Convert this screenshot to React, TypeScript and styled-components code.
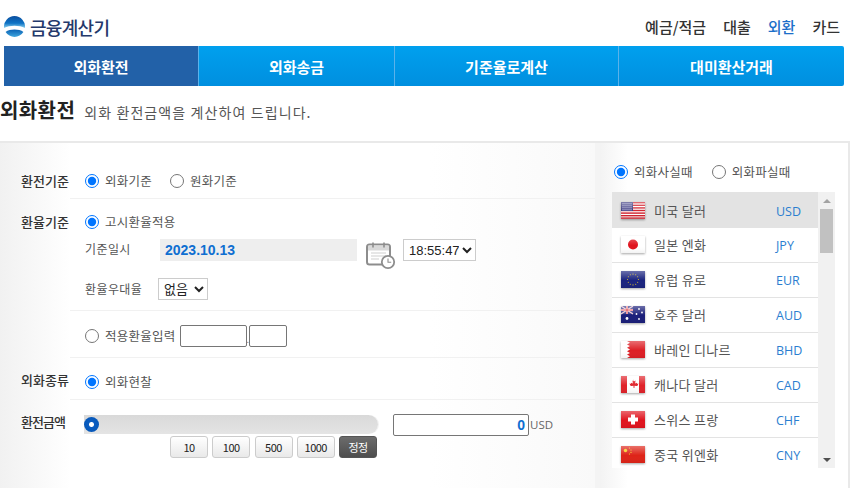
import React from 'react';
import styled, { createGlobalStyle } from 'styled-components';

const Global = createGlobalStyle`
  html, body { margin: 0; padding: 0; background: #fff; overflow: hidden; }
  body { width: 851px; height: 488px; font-family: "Noto Sans CJK KR", "Noto Sans", sans-serif; color: #444; }
  * { box-sizing: border-box; }
`;

const Page = styled.div`
  width: 851px;
  height: 488px;
  overflow: hidden;
`;

const Header = styled.header`
  height: 46px;
  padding: 16px 11px 0 4px;
  display: flex;
  justify-content: space-between;
  align-items: flex-start;
`;

const Brand = styled.div`
  display: flex;
  align-items: center;
  gap: 5px;
  height: 21px;
  font-size: 18px;
  font-weight: 500;
  letter-spacing: -0.7px;
  color: #24396b;
`;

const TopNav = styled.nav`
  display: flex;
  gap: 17px;
  padding-top: 1px;
  font-size: 15px;
  line-height: 20px;
  font-weight: 500;
`;

const TopLink = styled.a<{ $on?: boolean }>`
  color: ${p => (p.$on ? '#1c6fc9' : '#333')};
`;

const Tabs = styled.div`
  margin-left: 4px;
  width: 840px;
  height: 40px;
  display: grid;
  grid-template-columns: 195px 196px 224px 225px;
`;

const Tab = styled.div<{ $on?: boolean }>`
  display: flex;
  align-items: center;
  justify-content: center;
  font-size: 15px;
  font-weight: 700;
  color: #fff;
  background: ${p => (p.$on ? '#2261a8' : 'linear-gradient(#00a0ee, #008fdf)')};
  border-right: 1px solid #5bb2ea;
  &:last-child { border-right: 0; border-radius: 0 2px 2px 0; }
`;

const Heading = styled.div`
  height: 55px;
  padding-top: 10px;
  display: flex;
  align-items: flex-start;
  gap: 9px;
`;

const HeadTitle = styled.h2`
  margin: 0;
  font-size: 20px;
  line-height: 28px;
  font-weight: 700;
  letter-spacing: 0.4px;
  color: #222;
`;

const HeadSub = styled.span`
  padding-top: 6px;
  font-size: 14px;
  line-height: 20px;
  color: #555;
  letter-spacing: 1.1px;
`;

const Panel = styled.div`
  display: flex;
  width: 850px;
  height: 347px;
  border-top: 2px solid #e9e9e9;
  border-right: 2px solid #e9e9e9;
`;

const FormSide = styled.section`
  width: 595px;
  background: linear-gradient(90deg, #f1f1f1 0, #fff 70px, #fff 430px, #f9f9f9 595px);
`;

const Divider = styled.div`
  width: 5px;
  background: #f4f4f4;
`;

const Row = styled.div<{ $h: number }>`
  display: flex;
  height: ${p => p.$h}px;
`;

const RowLabel = styled.div<{ $top: number; $tight?: boolean }>`
  width: 70px;
  padding: ${p => p.$top}px 0 0 21px;
  font-size: 13px;
  line-height: 18px;
  font-weight: 500;
  letter-spacing: ${p => (p.$tight ? '-1px' : '0')};
  color: #333;
  white-space: nowrap;
`;

const RowBody = styled.div<{ $first?: boolean }>`
  flex: 1;
  padding-left: 15px;
  border-top: ${p => (p.$first ? '0' : '1px solid #f1f1f1')};
`;

const Line = styled.div<{ $top?: number; $start?: boolean }>`
  display: flex;
  align-items: ${p => (p.$start ? 'flex-start' : 'center')};
  padding-top: ${p => p.$top ?? 0}px;
`;

const RadioWrap = styled.label<{ $gap?: number }>`
  display: inline-flex;
  align-items: center;
  gap: 6px;
  margin-right: ${p => p.$gap ?? 0}px;
  font-size: 12.5px;
  line-height: 18px;
  letter-spacing: 0.25px;
  color: #555;
`;

const RadioDot = styled.input.attrs({ type: 'radio' })`
  width: 14px;
  height: 14px;
  margin: 0;
  accent-color: #0075ff;
`;

const SubLabel = styled.span<{ $w: number }>`
  width: ${p => p.$w}px;
  font-size: 12px;
  line-height: 20px;
  letter-spacing: 0.4px;
  color: #555;
`;

const DateField = styled.div`
  width: 197px;
  height: 22px;
  padding-left: 5px;
  background: #eee;
  font-family: "Liberation Sans", Arial, sans-serif;
  font-size: 14px;
  line-height: 23px;
  font-weight: 700;
  color: #0f6fd1;
`;

const PickerIcon = styled.svg`
  width: 30px;
  height: 28px;
  margin: 3px 7px 0 9px;
  flex: none;
`;

const NativeSelect = styled.select<{ $w: number }>`
  width: ${p => p.$w}px;
  height: 22px;
  padding: 0 0 0 1px;
  border: 1px solid #ccc;
  border-radius: 0;
  background: #fff;
  font-family: "Liberation Sans", "Noto Sans CJK KR", sans-serif;
  font-size: 13px;
  color: #222;
`;

const RateBox = styled.div<{ $w: number }>`
  width: ${p => p.$w}px;
  height: 22px;
  border: 1px solid #767676;
  border-radius: 2px;
  background: #fff;
`;

const Dot = styled.span`
  width: 2px;
  font-size: 9px;
  line-height: 14px;
  align-self: flex-end;
  color: #888;
`;

const SliderArea = styled.div`
  display: flex;
  gap: 15px;
  margin-left: -1px;
  padding-top: 14px;
`;

const SliderCol = styled.div`
  width: 294px;
`;

const SliderTrack = styled.div`
  height: 19px;
  margin-top: 1px;
  background: linear-gradient(#d9d9d9, #e4e4e4);
  border-radius: 0 10px 10px 0;
  box-shadow: 1px 0 0 #f2f2f2;
  position: relative;
`;

const SliderKnob = styled.span`
  position: absolute;
  left: 0;
  top: 2px;
  width: 15px;
  height: 15px;
  border-radius: 50%;
  background: radial-gradient(circle, #fff 0 2px, #0a5cc0 3px, #0455b4 100%);
`;

const Steps = styled.div`
  display: flex;
  justify-content: flex-end;
  gap: 4.25px;
  padding: 2px 1px 0 0;
`;

const StepBtn = styled.button<{ $dark?: boolean }>`
  width: 38px;
  height: 22px;
  padding: 0;
  border: 1px solid ${p => (p.$dark ? '#555' : '#ccc')};
  border-radius: 3px;
  background: ${p => (p.$dark ? 'linear-gradient(#6c6c6c, #4e4e4e)' : 'linear-gradient(#fff, #e9e9e9)')};
  color: ${p => (p.$dark ? '#fff' : '#222')};
  font-family: "Noto Sans CJK KR", sans-serif;
  font-size: 11px;
  line-height: 20px;
  letter-spacing: -0.5px;
`;

const AmountBox = styled.div`
  width: 136px;
  height: 22px;
  padding-right: 3px;
  border: 1px solid #767676;
  border-radius: 2px;
  background: #fff;
  text-align: right;
  font-family: "Liberation Sans", Arial, sans-serif;
  font-size: 14px;
  line-height: 21px;
  font-weight: 700;
  color: #0f6fd1;
`;

const Unit = styled.span`
  padding-left: 1px;
  font-family: "Open Sans", sans-serif;
  font-size: 11.5px;
  line-height: 22px;
  color: #666;
`;

const AmountWrap = styled.div`
  display: flex;
`;

const ListSide = styled.aside`
  flex: 1;
  padding: 20px 0 0 12px;
  background: linear-gradient(90deg, #f3f3f3 0, #fff 28px);
`;

const Modes = styled.div`
  display: flex;
  align-items: flex-start;
  height: 29px;
  padding-left: 2px;
`;

const ListFrame = styled.div`
  display: flex;
  width: 223px;
  height: 276px;
`;

const CurrencyList = styled.ul`
  width: 206px;
  margin: 0;
  padding: 0;
  list-style: none;
  background: #fff;
`;

const CurrencyRow = styled.li<{ $on?: boolean; $h: number }>`
  height: ${p => p.$h}px;
  display: grid;
  grid-template-columns: 33px 122px 1fr;
  padding: ${p => (p.$on ? 10 : 8)}px 0 0 9px;
  background: ${p => (p.$on ? '#e3e3e3' : '#fff')};
  border-bottom: ${p => (p.$on ? '0' : '1px solid #e3e3e3')};
  &:last-child { border-bottom: 0; }
`;

const FlagSvg = styled.svg`
  width: 24px;
  height: 17px;
  display: block;
  filter: drop-shadow(0 1px 1px rgba(0, 0, 0, 0.35));
`;

const CurName = styled.span`
  font-size: 13px;
  line-height: 18px;
  letter-spacing: 0.3px;
  color: #555;
`;

const CurCode = styled.span`
  padding-top: 1px;
  font-family: "Open Sans", sans-serif;
  font-size: 12.5px;
  line-height: 18px;
  color: #2b7ed0;
`;

const ScrollRail = styled.div`
  width: 17px;
  background: #f1f1f1;
  display: flex;
  flex-direction: column;
  align-items: center;
`;

const ScrollArrow = styled.span<{ $down?: boolean }>`
  width: 0;
  height: 0;
  margin: 7px 0 6px;
  border-left: 4px solid transparent;
  border-right: 4px solid transparent;
  ${p => (p.$down
    ? 'border-top: 4px solid #505050; margin-top: auto;'
    : 'border-bottom: 4px solid #a3a3a3;')}
`;

const ScrollThumb = styled.span`
  width: 13px;
  height: 44px;
  background: #c1c1c1;
`;

// Small glossy flags: each one is its field plus a shared highlight on top.
const Gloss = () => (
  <>
    <defs>
      <linearGradient id="flag-gloss" x1="0" y1="0" x2="0" y2="1">
        <stop offset="0" stopColor="#fff" stopOpacity="0.35" />
        <stop offset="0.55" stopColor="#fff" stopOpacity="0" />
        <stop offset="1" stopColor="#000" stopOpacity="0.05" />
      </linearGradient>
    </defs>
    <rect width="24" height="17" fill="url(#flag-gloss)" />
  </>
);

const Flag = ({ children }: { children: React.ReactNode }) => (
  <FlagSvg viewBox="0 0 24 17">
    {children}
    <Gloss />
  </FlagSvg>
);

const flags: Record<string, React.ReactNode> = {
  USD: (
    <>
      <rect width="24" height="17" fill="#fff" />
      {[0, 2.6, 5.2, 7.8, 10.4, 13, 15.4].map(y => (
        <rect key={y} y={y} width="24" height="1.4" fill="#d0202c" />
      ))}
      <rect width="12" height="9" fill="#3c3b80" />
      {[1.5, 3.5, 5.5, 7.5].map(y => (
        <rect key={y} x="1" y={y} width="10" height="0.7" fill="#b9b9dc" />
      ))}
    </>
  ),
  JPY: (
    <>
      <rect width="24" height="17" fill="#fff" />
      <circle cx="12" cy="8.5" r="5" fill="#e0141e" />
    </>
  ),
  EUR: (
    <>
      <rect width="24" height="17" fill="#1a237e" />
      {Array.from({ length: 12 }, (_, i) => {
        const a = (i * Math.PI) / 6;
        return <circle key={i} cx={12 + 5.4 * Math.cos(a)} cy={8.5 + 5.4 * Math.sin(a)} r="0.55" fill="#e6c620" />;
      })}
    </>
  ),
  AUD: (
    <>
      <rect width="24" height="17" fill="#1b1f7a" />
      <rect width="12" height="8" fill="#3a3f90" />
      <path d="M0 0l12 8M12 0L0 8" stroke="#f3d0d4" strokeWidth="1.2" />
      <path d="M6 0v8M0 4h12" stroke="#fff" strokeWidth="2" />
      <path d="M6 0v8M0 4h12" stroke="#d6202c" strokeWidth="1" />
      <circle cx="6" cy="12.5" r="1.4" fill="#fff" />
      <circle cx="18" cy="3" r="0.9" fill="#fff" />
      <circle cx="21" cy="6.5" r="0.9" fill="#fff" />
      <circle cx="15.5" cy="8" r="0.9" fill="#fff" />
      <circle cx="18" cy="13" r="0.9" fill="#fff" />
    </>
  ),
  BHD: (
    <>
      <rect width="24" height="17" fill="#dd1f26" />
      <path d="M0 0h6l3 1.7-3 1.7 3 1.7-3 1.7 3 1.7-3 1.7 3 1.7-3 1.7 3 1.7-3 1.6H0z" fill="#fff" />
    </>
  ),
  CAD: (
    <>
      <rect width="24" height="17" fill="#fff" />
      <rect width="6" height="17" fill="#e0232a" />
      <rect x="18" width="6" height="17" fill="#e0232a" />
      <path d="M12 3l1.2 2.2 1.4-.6-.5 3 1.6-.9.4 1.1 1.4-.2-.8 2-.7.5-2.6-.3.2 1.9h-1.2l.2-1.9-2.6.3-.7-.5-.8-2 1.4.2.4-1.1 1.6.9-.5-3 1.4.6z" fill="#e0232a" />
    </>
  ),
  CHF: (
    <>
      <rect width="24" height="17" fill="#e0141e" />
      <rect x="10" y="3.5" width="4" height="10" fill="#fff" />
      <rect x="7" y="6.5" width="10" height="4" fill="#fff" />
    </>
  ),
  CNY: (
    <>
      <rect width="24" height="17" fill="#de2418" />
      <circle cx="4.5" cy="4.5" r="1.7" fill="#f5d020" />
      <circle cx="8.5" cy="2" r="0.6" fill="#f5d020" />
      <circle cx="10" cy="4" r="0.6" fill="#f5d020" />
      <circle cx="10" cy="6.4" r="0.6" fill="#f5d020" />
      <circle cx="8.5" cy="8" r="0.6" fill="#f5d020" />
    </>
  ),
};

const currencies = [
  { code: 'USD', name: '미국 달러' },
  { code: 'JPY', name: '일본 엔화' },
  { code: 'EUR', name: '유럽 유로' },
  { code: 'AUD', name: '호주 달러' },
  { code: 'BHD', name: '바레인 디나르' },
  { code: 'CAD', name: '캐나다 달러' },
  { code: 'CHF', name: '스위스 프랑' },
  { code: 'CNY', name: '중국 위엔화' },
];

const Logo = () => (
  <svg width="21" height="21" viewBox="0 0 21 21">
    <defs>
      <linearGradient id="logo-top" x1="0" y1="0" x2="0" y2="1">
        <stop offset="0" stopColor="#0b4f9f" />
        <stop offset="0.6" stopColor="#0f74c6" />
        <stop offset="1" stopColor="#8fd2ee" />
      </linearGradient>
      <linearGradient id="logo-bottom" x1="0" y1="0" x2="0" y2="1">
        <stop offset="0" stopColor="#0a62b4" />
        <stop offset="1" stopColor="#3fa6de" />
      </linearGradient>
    </defs>
    <path d="M0.1 12A10.5 10.5 0 1 1 20.9 12C15.5 9 5.5 9 0.1 12Z" fill="url(#logo-top)" />
    <path d="M1.6 16C6 12.8 15 12.8 19.4 16A10.5 10.5 0 0 1 1.6 16Z" fill="url(#logo-bottom)" />
  </svg>
);

const CalendarClock = () => (
  <PickerIcon viewBox="0 0 30 28" fill="none">
    <rect x="1" y="2.5" width="23" height="20" rx="2.5" stroke="#8d8d8d" strokeWidth="2" fill="#fff" />
    <rect x="2" y="3.5" width="21" height="5" fill="#d9d9d9" />
    <path d="M7 0.5v5M18 0.5v5" stroke="#8d8d8d" strokeWidth="1.6" />
    <path d="M5 11h15M5 14h15M5 17h8" stroke="#cfcfcf" strokeWidth="1.1" />
    <circle cx="22" cy="20" r="6.2" fill="#fff" stroke="#8d8d8d" strokeWidth="1.8" />
    <path d="M22 16.5V20.3h3.2" stroke="#8d8d8d" strokeWidth="1.1" />
  </PickerIcon>
);

export default function App() {
  return (
    <Page>
      <Global />
      <Header>
        <Brand>
          <Logo />
          금융계산기
        </Brand>
        <TopNav>
          <TopLink>예금/적금</TopLink>
          <TopLink>대출</TopLink>
          <TopLink $on>외환</TopLink>
          <TopLink>카드</TopLink>
        </TopNav>
      </Header>

      <Tabs>
        <Tab $on>외화환전</Tab>
        <Tab>외화송금</Tab>
        <Tab>기준율로계산</Tab>
        <Tab>대미환산거래</Tab>
      </Tabs>

      <Heading>
        <HeadTitle>외화환전</HeadTitle>
        <HeadSub>외화 환전금액을 계산하여 드립니다.</HeadSub>
      </Heading>

      <Panel>
        <FormSide>
          <Row $h={55}>
            <RowLabel $top={29}>환전기준</RowLabel>
            <RowBody $first>
              <Line $top={29}>
                <RadioWrap $gap={18}>
                  <RadioDot name="basis" defaultChecked />
                  외화기준
                </RadioWrap>
                <RadioWrap>
                  <RadioDot name="basis" />
                  원화기준
                </RadioWrap>
              </Line>
            </RowBody>
          </Row>

          <Row $h={112}>
            <RowLabel $top={15}>환율기준</RowLabel>
            <RowBody>
              <Line $top={14}>
                <RadioWrap>
                  <RadioDot name="rate" defaultChecked />
                  고시환율적용
                </RadioWrap>
              </Line>
              <Line $top={8} $start>
                <SubLabel $w={75}>기준일시</SubLabel>
                <DateField>2023.10.13</DateField>
                <CalendarClock />
                <NativeSelect $w={73} defaultValue="18:55:47">
                  <option>18:55:47</option>
                </NativeSelect>
              </Line>
              <Line $top={8}>
                <SubLabel $w={73}>환율우대율</SubLabel>
                <NativeSelect $w={50} defaultValue="없음">
                  <option>없음</option>
                </NativeSelect>
              </Line>
            </RowBody>
          </Row>

          <Row $h={47}>
            <RowLabel $top={0} />
            <RowBody>
              <Line $top={14}>
                <RadioWrap $gap={4}>
                  <RadioDot name="rate" />
                  적용환율입력
                </RadioWrap>
                <RateBox $w={67} />
                <Dot>.</Dot>
                <RateBox $w={38} />
              </Line>
            </RowBody>
          </Row>

          <Row $h={42}>
            <RowLabel $top={14}>외화종류</RowLabel>
            <RowBody>
              <Line $top={15}>
                <RadioWrap>
                  <RadioDot name="kind" defaultChecked />
                  외화현찰
                </RadioWrap>
              </Line>
            </RowBody>
          </Row>

          <Row $h={89}>
            <RowLabel $top={14} $tight>환전금액</RowLabel>
            <RowBody>
              <SliderArea>
                <SliderCol>
                  <SliderTrack>
                    <SliderKnob />
                  </SliderTrack>
                  <Steps>
                    <StepBtn>10</StepBtn>
                    <StepBtn>100</StepBtn>
                    <StepBtn>500</StepBtn>
                    <StepBtn>1000</StepBtn>
                    <StepBtn $dark>정정</StepBtn>
                  </Steps>
                </SliderCol>
                <AmountWrap>
                  <AmountBox>0</AmountBox>
                  <Unit>USD</Unit>
                </AmountWrap>
              </SliderArea>
            </RowBody>
          </Row>
        </FormSide>

        <Divider />

        <ListSide>
          <Modes>
            <RadioWrap $gap={19}>
              <RadioDot name="mode" defaultChecked />
              외화사실때
            </RadioWrap>
            <RadioWrap>
              <RadioDot name="mode" />
              외화파실때
            </RadioWrap>
          </Modes>
          <ListFrame>
            <CurrencyList>
              {currencies.map((c, i) => (
                <CurrencyRow key={c.code} $on={i === 0} $h={i === 0 ? 36 : i === 7 ? 30 : 35}>
                  <Flag>{flags[c.code]}</Flag>
                  <CurName>{c.name}</CurName>
                  <CurCode>{c.code}</CurCode>
                </CurrencyRow>
              ))}
            </CurrencyList>
            <ScrollRail>
              <ScrollArrow />
              <ScrollThumb />
              <ScrollArrow $down />
            </ScrollRail>
          </ListFrame>
        </ListSide>
      </Panel>
    </Page>
  );
}
